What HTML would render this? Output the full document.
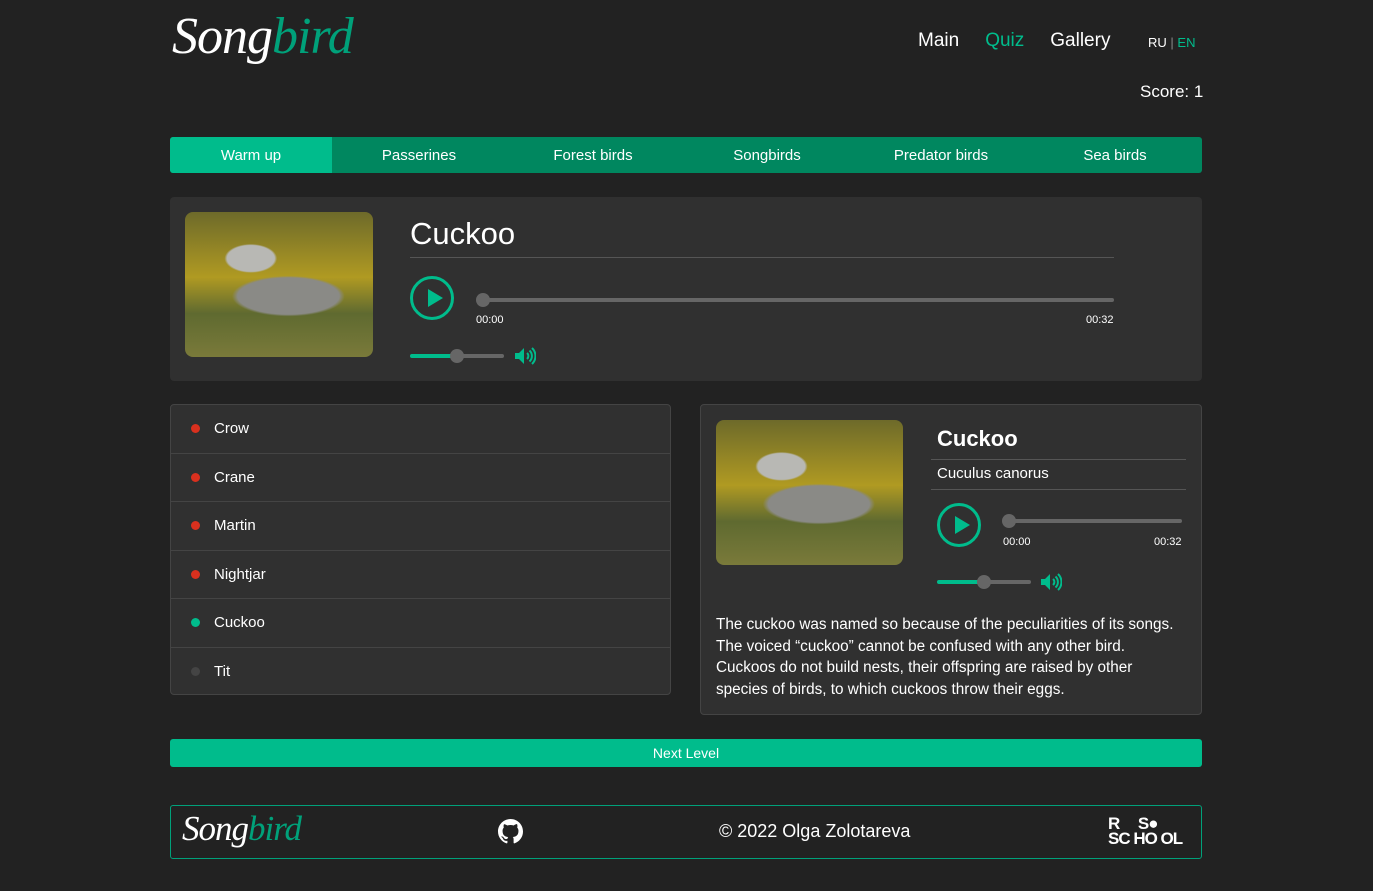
<!DOCTYPE html>
<html><head><meta charset="utf-8"><style>
*{box-sizing:border-box;margin:0;padding:0}
body{width:1373px;height:891px;background:#222;color:#fff;font-family:"Liberation Sans",sans-serif;position:relative;overflow:hidden}
.abs{position:absolute}
.logo{font-family:"Liberation Serif",serif;font-style:italic;font-size:52px;letter-spacing:-1px}
.logo b{font-weight:normal;color:#00a17a}
.nav a{color:#fff;font-size:19px;margin-left:26px;text-decoration:none}
.tabs{left:170px;top:137px;width:1032px;height:36px;background:#00875f;border-radius:3px;display:flex;font-size:15px;overflow:hidden}
.tabs div{flex:1;text-align:center;line-height:37px}
.panel{background:#303030;border-radius:4px}
.img{background:radial-gradient(ellipse 14% 10% at 35% 32%,#b8b8b4 0 90%,transparent 100%),radial-gradient(ellipse 30% 14% at 55% 58%,#8a8a86 0 90%,transparent 100%),linear-gradient(180deg,#6d6a2a 0%,#b09a22 45%,#5f6a30 70%,#7a7a3a 100%);border-radius:8px}
.play{width:44px;height:44px;border:3px solid #00bc8c;border-radius:50%}
.play:after{content:"";position:absolute;left:15px;top:10px;border-left:15px solid #00bc8c;border-top:9px solid transparent;border-bottom:9px solid transparent}
.bar{height:4px;background:#666;border-radius:2px}
.knob{width:14px;height:14px;border-radius:50%;background:#666}
.list{left:170px;top:404px;width:501px;height:291px;border:1px solid #444;border-radius:4px;background:#303030}
.list div{height:48.5px;border-bottom:1px solid #444;font-size:15px;line-height:47px;padding-left:43px;position:relative}
.list div:last-child{border:none}
.list i{position:absolute;left:20px;top:19px;width:9px;height:9px;border-radius:50%;background:#d9301e}
.t{font-size:11px}
</style></head><body>
<div class="abs logo" style="left:172px;top:7px">Song<b>bird</b></div>
<div class="abs nav" style="left:892px;top:30px"><a>Main</a><a style="color:#00bc8c">Quiz</a><a>Gallery</a></div>
<div class="abs" style="left:1148px;top:35px;font-size:13px">RU <span style="color:#888">|</span> <span style="color:#00bc8c">EN</span></div>
<div class="abs" style="left:1140px;top:82px;font-size:17px">Score: 1</div>
<div class="abs tabs"><div style="background:#00bc8c;flex:0 0 162px">Warm up</div><div>Passerines</div><div>Forest birds</div><div>Songbirds</div><div>Predator birds</div><div>Sea birds</div></div>

<div class="abs panel" style="left:170px;top:197px;width:1032px;height:184px"></div>
<div class="abs img" style="left:185px;top:212px;width:188px;height:145px"></div>
<div class="abs" style="left:410px;top:216px;font-size:31px">Cuckoo</div>
<div class="abs" style="left:410px;top:257px;width:704px;height:1px;background:#555"></div>
<div class="abs play" style="left:410px;top:276px"></div>
<div class="abs bar" style="left:482px;top:298px;width:632px"></div>
<div class="abs knob" style="left:476px;top:293px"></div>
<div class="abs t" style="left:476px;top:314px">00:00</div>
<div class="abs t" style="left:1086px;top:314px">00:32</div>
<div class="abs bar" style="left:410px;top:354px;width:94px;background:linear-gradient(90deg,#00bc8c 50%,#666 50%)"></div>
<div class="abs knob" style="left:450px;top:349px"></div>
<svg class="abs" style="left:514px;top:346px" width="22" height="20" viewBox="0 0 22 20" fill="none" stroke="#00bc8c" stroke-width="2"><path d="M1 7h4l5-5v16l-5-5H1z" fill="#00bc8c" stroke="none"/><path d="M13 7a4 4 0 010 6M15.5 4.5a7.5 7.5 0 010 11M18 2a11 11 0 010 16"/></svg>

<div class="abs list">
<div><i></i>Crow</div><div><i></i>Crane</div><div><i></i>Martin</div><div><i></i>Nightjar</div><div><i style="background:#00bc8c"></i>Cuckoo</div><div><i style="background:#444"></i>Tit</div>
</div>

<div class="abs panel" style="left:700px;top:404px;width:502px;height:311px;border:1px solid #444"></div>
<div class="abs img" style="left:716px;top:420px;width:187px;height:145px"></div>
<div class="abs" style="left:937px;top:426px;font-size:22px;font-weight:bold">Cuckoo</div>
<div class="abs" style="left:931px;top:459px;width:255px;height:1px;background:#555"></div>
<div class="abs" style="left:937px;top:465px;font-size:15px">Cuculus canorus</div>
<div class="abs" style="left:931px;top:489px;width:255px;height:1px;background:#555"></div>
<div class="abs play" style="left:937px;top:503px"></div>
<div class="abs bar" style="left:1008px;top:519px;width:174px"></div>
<div class="abs knob" style="left:1002px;top:514px"></div>
<div class="abs t" style="left:1003px;top:536px">00:00</div>
<div class="abs t" style="left:1154px;top:536px">00:32</div>
<div class="abs bar" style="left:937px;top:580px;width:94px;background:linear-gradient(90deg,#00bc8c 50%,#666 50%)"></div>
<div class="abs knob" style="left:977px;top:575px"></div>
<svg class="abs" style="left:1040px;top:572px" width="22" height="20" viewBox="0 0 22 20" fill="none" stroke="#00bc8c" stroke-width="2"><path d="M1 7h4l5-5v16l-5-5H1z" fill="#00bc8c" stroke="none"/><path d="M13 7a4 4 0 010 6M15.5 4.5a7.5 7.5 0 010 11M18 2a11 11 0 010 16"/></svg>
<div class="abs" style="left:716px;top:614px;width:468px;font-size:15.3px;line-height:21.5px">The cuckoo was named so because of the peculiarities of its songs. The voiced “cuckoo” cannot be confused with any other bird. Cuckoos do not build nests, their offspring are raised by other species of birds, to which cuckoos throw their eggs.</div>

<div class="abs" style="left:170px;top:739px;width:1032px;height:28px;background:#00bc8c;border-radius:3px;text-align:center;line-height:28px;font-size:14px">Next Level</div>

<div class="abs" style="left:170px;top:805px;width:1032px;height:54px;border:1px solid #00a17a;border-radius:3px"></div>
<div class="abs logo" style="left:182px;top:809px;font-size:35px">Song<b>bird</b></div>
<svg class="abs" style="left:498px;top:819px" width="25" height="25" viewBox="0 0 16 16"><path fill="#fff" d="M8 0C3.58 0 0 3.580 0 8c0 3.54 2.29 6.53 5.47 7.59.4.07.55-.17.55-.38v-1.33c-2.23.48-2.7-1.07-2.7-1.07-.36-.92-.89-1.17-.89-1.17-.73-.5.06-.49.06-.49.8.06 1.23.83 1.23.83.71 1.22 1.87.87 2.33.66.07-.52.28-.87.51-1.07-1.78-.2-3.65-.89-3.65-3.95 0-.87.31-1.59.82-2.15-.08-.2-.36-1.02.08-2.12 0 0 .67-.21 2.2.82A7.7 7.7 0 018 3.86c.68 0 1.36.09 2 .27 1.53-1.04 2.2-.82 2.2-.82.44 1.1.16 1.92.08 2.12.51.56.82 1.27.82 2.15 0 3.07-1.87 3.75-3.65 3.95.29.25.54.73.54 1.48v2.2c0 .21.15.46.55.38A8 8 0 0016 8c0-4.42-3.58-8-8-8z"/></svg>
<div class="abs" style="left:719px;top:821px;font-size:18px">© 2022 Olga Zolotareva</div>
<div class="abs" style="left:1108px;top:816px;font-size:17px;font-weight:bold;line-height:15px;letter-spacing:-1px">R&nbsp;&nbsp;&nbsp;&nbsp;&nbsp;S●<br>SC HO OL</div>
</body></html>
